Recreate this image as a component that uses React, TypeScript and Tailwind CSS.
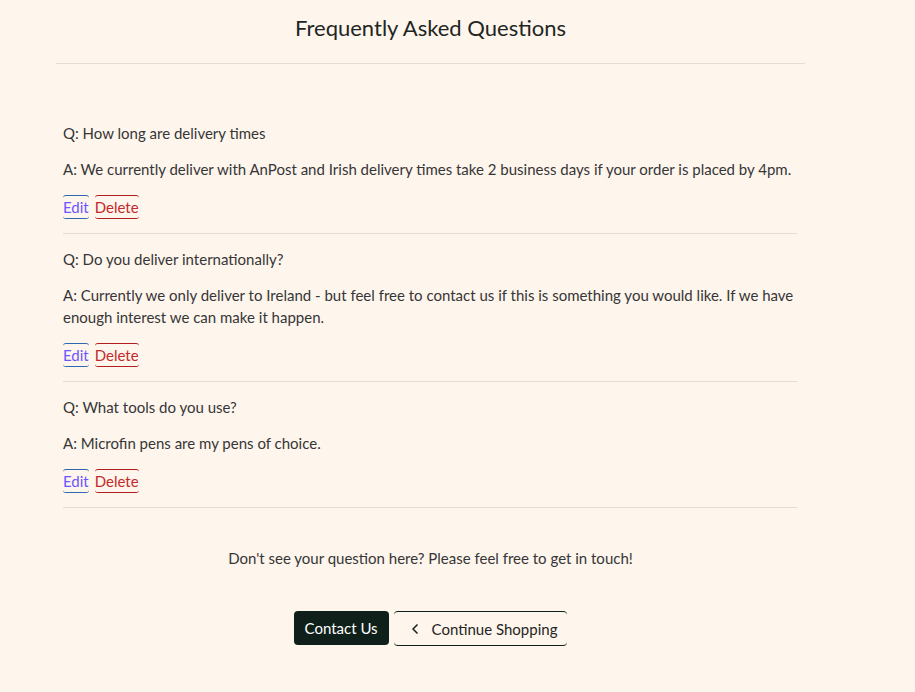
import { ChevronLeft } from 'lucide-react';

const faqs = [
  {
    q: 'How long are delivery times',
    a: 'We currently deliver with AnPost and Irish delivery times take 2 business days if your order is placed by 4pm.',
  },
  {
    q: 'Do you deliver internationally?',
    a: 'Currently we only deliver to Ireland - but feel free to contact us if this is something you would like. If we have enough interest we can make it happen.',
  },
  {
    q: 'What tools do you use?',
    a: 'Microfin pens are my pens of choice.',
  },
];

const App = () => {
  return (
    <div className="min-h-[692px] bg-[#fef5ed] font-['Lato',sans-serif] text-[15px] leading-[22px] text-[#363636]">
      <div className="ml-[56px] w-[749px]">
        <h1 className="pt-[14px] pb-[21px] text-center text-[22px] leading-[28px] text-[#1f2622]">
          Frequently Asked Questions
        </h1>
        <hr className="border-[#e5ddd4]" />

        <div className="mt-[58px] px-[7px] pr-[8px]">
          {faqs.map((f) => (
            <div key={f.q} className="pb-[14px] mb-[14px] border-b border-[#e3dcd4]">
              <p className="mb-[14px]">Q: {f.q}</p>
              <p className="mb-[15px]">A: {f.a}</p>
              <div className="flex gap-[6px]">
                <button className="h-[24px] rounded-[3px] border-y border-[#2f68b0] text-[#6b57ff] leading-[22px]">
                  Edit
                </button>
                <button className="h-[24px] rounded-[3px] border-y border-[#b21d1d] text-[#c22a2a] leading-[22px]">
                  Delete
                </button>
              </div>
            </div>
          ))}
        </div>

        <p className="mt-[39px] text-center">
          Don't see your question here? Please feel free to get in touch!
        </p>

        <div className="mt-[42px] flex justify-center gap-[5px]">
          <button className="h-[34px] rounded-[4px] bg-[#0f1f1a] px-[11px] text-white">
            Contact Us
          </button>
          <button className="flex h-[35px] items-center gap-[9px] rounded-[4px] border-y border-[#0f1f1a] pl-[13px] pr-[10px] text-[#1f2622]">
            <ChevronLeft size={16} strokeWidth={2.5} />
            Continue Shopping
          </button>
        </div>
      </div>
    </div>
  );
};

export default App;
